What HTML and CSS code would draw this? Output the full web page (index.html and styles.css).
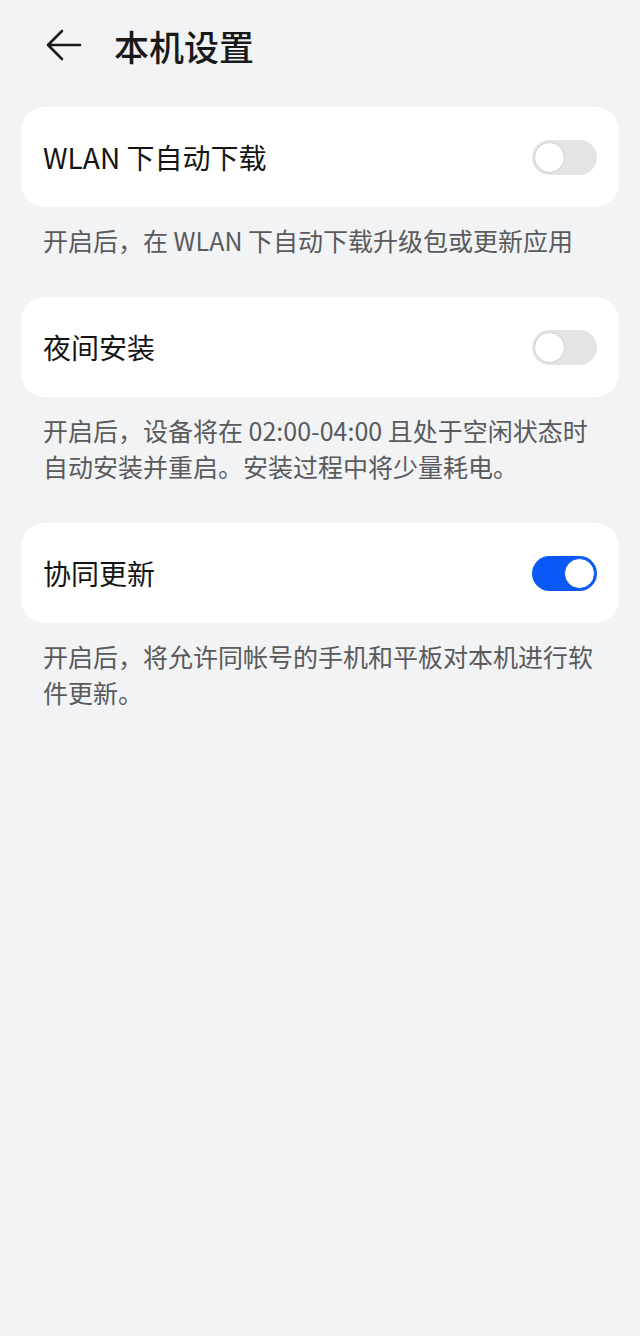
FILE: index.html
```html
<!DOCTYPE html>
<html lang="zh-CN">
<head>
<meta charset="utf-8">
<title>本机设置</title>
<link rel="stylesheet" href="styles.css">
</head>
<body>
<header class="topbar">
  <svg class="back" width="36" height="32" viewBox="0 0 36 32" aria-hidden="true">
    <path d="M34 16H3M16 2L2 16L16 30" fill="none" stroke="#1a1a1a" stroke-width="2.6" stroke-linecap="round" stroke-linejoin="round"/>
  </svg>
  <h1 class="title">本机设置</h1>
</header>
<main class="content">
  <section class="group">
    <div class="card">
      <span class="label">WLAN 下自动下载</span>
      <span class="switch"><span class="knob"></span></span>
    </div>
    <p class="desc">开启后，在 WLAN 下自动下载升级包或更新应用</p>
  </section>
  <section class="group">
    <div class="card">
      <span class="label">夜间安装</span>
      <span class="switch"><span class="knob"></span></span>
    </div>
    <p class="desc">开启后，设备将在 02:00-04:00 且处于空闲状态时自动安装并重启。安装过程中将少量耗电。</p>
  </section>
  <section class="group">
    <div class="card">
      <span class="label">协同更新</span>
      <span class="switch on"><span class="knob"></span></span>
    </div>
    <p class="desc">开启后，将允许同帐号的手机和平板对本机进行软件更新。</p>
  </section>
</main>
</body>
</html>
```
FILE: styles.css
```css
html, body {
  margin: 0;
  padding: 0;
  background: #f1f3f5;
  font-family: "Noto Sans CJK SC", "Noto Sans", sans-serif;
}

.topbar {
  height: 90px;
  display: flex;
  align-items: center;
  padding-left: 46px;
}

.back {
  display: block;
  flex: none;
}

.title {
  margin: 0 0 0 32px;
  font-size: 35px;
  font-weight: 500;
  color: #191919;
  line-height: 1;
}

.content {
  padding: 17px 21px 0;
}

.card {
  height: 100px;
  background: #ffffff;
  border-radius: 24px;
  display: flex;
  align-items: center;
  justify-content: space-between;
  padding: 0 22px;
  box-sizing: border-box;
}

.label {
  font-size: 28px;
  font-weight: 400;
  color: #141414;
}

.switch {
  width: 65px;
  height: 35px;
  border-radius: 18px;
  background: #e4e4e6;
  display: flex;
  align-items: center;
  padding: 0 2px;
  box-sizing: border-box;
}

.knob {
  width: 31px;
  height: 31px;
  border-radius: 50%;
  background: #ffffff;
  box-sizing: border-box;
  border: 1px solid #cfcfd1;
}

.switch.on {
  background: #0a59f7;
  justify-content: flex-end;
}

.switch.on .knob {
  border-color: #0a59f7;
}

.desc {
  margin: 0;
  padding: 15px 22px 39px;
  font-size: 25px;
  line-height: 36px;
  color: #5a5a5c;
}
```
